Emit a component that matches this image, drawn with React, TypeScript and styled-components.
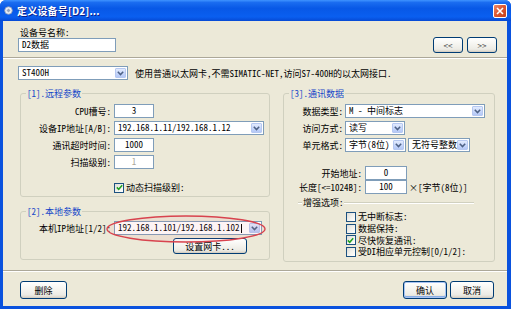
import React from 'react';
import styled, { createGlobalStyle } from 'styled-components';

const Global = createGlobalStyle`
  html, body { margin: 0; padding: 0; background: #fff; }
  body {
    font-family: "Noto Sans Mono CJK SC", "Noto Sans CJK SC", "Noto Sans", sans-serif;
    font-size: 9px;
    color: #000;
  }
  * { box-sizing: border-box; }
`;

const Window = styled.div`
  width: 511px;
  height: 309px;
  display: flex;
  flex-direction: column;
  background: #0a52de;
  border-radius: 6px 6px 0 0;
  overflow: hidden;
`;

const TitleBar = styled.div`
  height: 21px;
  flex: none;
  display: flex;
  align-items: center;
  padding: 0 4px 0 4px;
  background: linear-gradient(
    to bottom,
    #3f93ff 0%,
    #1a6cf0 12%,
    #0858e6 40%,
    #0a5ff0 80%,
    #0649d4 100%
  );
`;

const TitleIcon = styled.svg`
  width: 9px;
  height: 9px;
  flex: none;
`;

const TitleText = styled.div`
  flex: 1;
  margin-left: 4px;
  color: #fff;
  font-family: "Noto Sans CJK SC", sans-serif;
  font-weight: bold;
  font-size: 10px;
  letter-spacing: 0.2px;
  text-shadow: 1px 1px 0 #0a1e8a;
  white-space: nowrap;
`;

const CloseBtn = styled.div`
  width: 14px;
  height: 14px;
  flex: none;
  border: 1px solid #fff;
  border-radius: 2px;
  background: linear-gradient(135deg, #ee8a6a 0%, #dd5a35 45%, #c2401c 100%);
  display: flex;
  align-items: center;
  justify-content: center;
`;

const Client = styled.div`
  flex: 1;
  margin: 0 4px 3px 3px;
  background: #ece9d8;
  display: flex;
  flex-direction: column;
`;

const TopSection = styled.div`
  height: 36px;
  flex: none;
  display: flex;
  justify-content: space-between;
  align-items: flex-start;
  padding: 6px 10px 0 15px;
`;

const NameBlock = styled.div`
  display: flex;
  flex-direction: column;
`;

const NameLabel = styled.div`
  height: 11px;
  line-height: 11px;
  margin-left: 2px;
  white-space: nowrap;
`;

const TextBox = styled.div<{ $w: number; $center?: boolean; $disabled?: boolean }>`
  width: ${(p) => p.$w}px;
  height: 14px;
  flex: none;
  border: 1px solid #7f9db9;
  background: #fff;
  display: flex;
  align-items: center;
  justify-content: ${(p) => (p.$center ? 'center' : 'flex-start')};
  padding: 0 3px;
  color: ${(p) => (p.$disabled ? '#aca899' : '#000')};
  white-space: nowrap;
  line-height: 12px;
`;

const NavGroup = styled.div`
  display: flex;
  gap: 4px;
  padding-top: 10px;
`;

const Button = styled.div<{ $w: number; $h?: number; $default?: boolean }>`
  width: ${(p) => p.$w}px;
  height: ${(p) => p.$h ?? 18}px;
  flex: none;
  border: 1px solid #003c74;
  border-radius: 3px;
  background: linear-gradient(to bottom, #ffffff 0%, #f4f3ee 50%, #ecebe5 80%, #d8d2c6 100%);
  display: flex;
  align-items: center;
  justify-content: center;
  white-space: nowrap;
  box-shadow: ${(p) =>
    p.$default ? 'inset 0 0 0 1px #a8c3f2, inset 0 -1px 0 1px #89ade4' : 'inset 0 -1px 0 #d6d0c5'};
`;

const NavText = styled.span`
  color: #555;
  font-size: 9px;
`;

const Separator = styled.div<{ $mt?: number }>`
  height: 2px;
  flex: none;
  margin-top: ${(p) => p.$mt ?? 0}px;
  border-top: 1px solid #aca899;
  border-bottom: 1px solid #fff;
`;

const ModelRow = styled.div`
  display: flex;
  align-items: center;
  gap: 7px;
  margin-top: 7px;
  padding-left: 15px;
  height: 14px;
  white-space: nowrap;
`;

const ComboBox = styled.div<{ $w: number }>`
  width: ${(p) => p.$w}px;
  height: 14px;
  flex: none;
  border: 1px solid #7f9db9;
  background: #fff;
  display: flex;
  padding: 1px;
`;

const ComboText = styled.span`
  flex: 1;
  min-width: 0;
  display: flex;
  align-items: center;
  padding-left: 2px;
  white-space: nowrap;
  line-height: 12px;
`;

const Caret = styled.span`
  display: inline-block;
  width: 1px;
  height: 9px;
  background: #000;
  margin-left: 1px;
`;

const ComboArrow = styled.span`
  width: 11px;
  flex: none;
  border: 1px solid #b6c8f1;
  border-radius: 1px;
  background: linear-gradient(to bottom, #e2ebfe 0%, #c5d5fa 60%, #b4c8f6 100%);
  display: flex;
  align-items: center;
  justify-content: center;
`;

const Columns = styled.div`
  display: flex;
  gap: 13px;
  padding: 0 12px 0 17px;
  margin-top: 8px;
`;

const LeftCol = styled.div`
  width: 251px;
  display: flex;
  flex-direction: column;
`;

const Group = styled.fieldset<{ $h: number; $w?: number; $mt?: number }>`
  margin: ${(p) => p.$mt ?? 0}px 0 0 0;
  padding: 0;
  height: ${(p) => p.$h}px;
  width: ${(p) => (p.$w ? `${p.$w}px` : 'auto')};
  border: 1px solid #d0d0bf;
  border-radius: 3px;
  min-width: 0;
  position: relative;
`;

const Legend = styled.legend`
  margin-left: 5px;
  padding: 0 1px;
  color: #1446c8;
  line-height: 11px;
  height: 11px;
  white-space: nowrap;
`;

const FormGrid = styled.div<{ $label: number; $gap?: number; $pt?: number; $rowGap?: number }>`
  display: grid;
  grid-template-columns: ${(p) => p.$label}px auto;
  column-gap: ${(p) => p.$gap ?? 3}px;
  row-gap: ${(p) => p.$rowGap ?? 3}px;
  padding-top: ${(p) => p.$pt ?? 0}px;
  align-items: center;
  justify-items: start;
`;

const FieldLabel = styled.div`
  justify-self: end;
  white-space: nowrap;
  line-height: 11px;
`;

const Controls = styled.div<{ $mt?: number; $ml?: number }>`
  grid-column: 2;
  display: flex;
  align-items: center;
  gap: 2px;
  margin-top: ${(p) => p.$mt ?? 0}px;
  margin-left: ${(p) => p.$ml ?? 0}px;
  white-space: nowrap;
`;

const CheckRow = styled.div`
  display: flex;
  align-items: center;
  height: 11.7px;
  white-space: nowrap;
`;

const CheckBox = styled.span`
  width: 10px;
  height: 10px;
  flex: none;
  margin-right: 2px;
  border: 1px solid #1c5180;
  background: linear-gradient(135deg, #dcdcd7 0%, #f4f4f0 60%, #ffffff 100%);
  display: flex;
  align-items: center;
  justify-content: center;
`;

const OptionHeader = styled.div`
  display: flex;
  align-items: center;
  height: 11px;
  margin: 3px 20px 3px 14px;
`;

const EtchLine = styled.div<{ $w?: number }>`
  flex: ${(p) => (p.$w ? 'none' : '1')};
  width: ${(p) => (p.$w ? `${p.$w}px` : 'auto')};
  height: 2px;
  border-top: 1px solid #d0d0bf;
  border-bottom: 1px solid #fff;
`;

const OptionTitle = styled.span`
  padding: 0 1px;
  white-space: nowrap;
`;

const OptionList = styled.div`
  display: flex;
  flex-direction: column;
  padding-left: 62px;
`;

const Annotation = styled.svg`
  position: absolute;
  left: 85px;
  top: -2px;
  width: 160px;
  height: 28px;
  pointer-events: none;
  overflow: visible;
`;

const Footer = styled.div`
  display: flex;
  align-items: center;
  justify-content: space-between;
  padding: 0 13px 0 17px;
  margin-top: 9px;
`;

const FooterRight = styled.div`
  display: flex;
  gap: 3px;
`;

const Chevron = () => (
  <svg width="7" height="5" viewBox="0 0 7 5">
    <path d="M0.8 0.8 L3.5 3.6 L6.2 0.8" fill="none" stroke="#4d6185" strokeWidth="1.5" />
  </svg>
);

const Combo: React.FC<{ w: number; children?: React.ReactNode }> = ({ w, children }) => (
  <ComboBox $w={w}>
    <ComboText>{children}</ComboText>
    <ComboArrow>
      <Chevron />
    </ComboArrow>
  </ComboBox>
);

const Check: React.FC<{ checked?: boolean; label: string }> = ({ checked, label }) => (
  <CheckRow>
    <CheckBox>
      {checked && (
        <svg width="7" height="7" viewBox="0 0 7 7">
          <path d="M0.8 3.4 L2.7 5.3 L6.2 1.2" fill="none" stroke="#21a121" strokeWidth="1.5" />
        </svg>
      )}
    </CheckBox>
    <span>{label}</span>
  </CheckRow>
);

export default function App() {
  return (
    <>
      <Global />
      <Window>
        <TitleBar>
          <TitleIcon viewBox="0 0 9 9">
            <circle cx="4.5" cy="4.5" r="3.8" fill="#e8ecf4" stroke="#8a9ab8" strokeWidth="0.8" />
            <path d="M2.5 4.5 L4.5 2.5 L6.5 4.5 L4.5 6.5 Z" fill="#9aa6bb" />
          </TitleIcon>
          <TitleText>定义设备号[D2]...</TitleText>
          <CloseBtn>
            <svg width="8" height="8" viewBox="0 0 8 8">
              <path d="M1 1 L7 7 M7 1 L1 7" stroke="#fff" strokeWidth="1.6" />
            </svg>
          </CloseBtn>
        </TitleBar>
        <Client>
          <TopSection>
            <NameBlock>
              <NameLabel>设备号名称:</NameLabel>
              <TextBox $w={98}>D2数据</TextBox>
            </NameBlock>
            <NavGroup>
              <Button $w={30} $h={16}>
                <NavText>&lt;&lt;</NavText>
              </Button>
              <Button $w={30} $h={16}>
                <NavText>&gt;&gt;</NavText>
              </Button>
            </NavGroup>
          </TopSection>
          <Separator />
          <ModelRow>
            <Combo w={110}>ST400H</Combo>
            <span>使用普通以太网卡,不需SIMATIC-NET,访问S7-400H的以太网接口.</span>
          </ModelRow>
          <Columns>
            <LeftCol>
              <Group $h={109}>
                <Legend>[1].远程参数</Legend>
                <FormGrid $label={90} $pt={5}>
                  <FieldLabel>CPU槽号:</FieldLabel>
                  <TextBox $w={40} $center>3</TextBox>
                  <FieldLabel>设备IP地址[A/B]:</FieldLabel>
                  <Combo w={150}>192.168.1.11/192.168.1.12</Combo>
                  <FieldLabel>通讯超时时间:</FieldLabel>
                  <TextBox $w={40} $center>1000</TextBox>
                  <FieldLabel>扫描级别:</FieldLabel>
                  <TextBox $w={40} $center $disabled>1</TextBox>
                  <Controls $mt={10}>
                    <Check checked label="动态扫描级别:" />
                  </Controls>
                </FormGrid>
              </Group>
              <Group $h={54} $mt={9}>
                <Legend>[2].本地参数</Legend>
                <FormGrid $label={90} $pt={4}>
                  <FieldLabel>本机IP地址[1/2]:</FieldLabel>
                  <Combo w={148}>
                    192.168.1.101/192.168.1.102
                    <Caret />
                  </Combo>
                  <Controls $ml={59}>
                    <Button $w={74} $h={16}>
                      设置网卡...
                    </Button>
                  </Controls>
                </FormGrid>
                <Annotation viewBox="0 0 160 28">
                  <ellipse cx="80" cy="14" rx="79" ry="13" fill="rgba(230,120,130,0.08)" stroke="#d8434e" strokeWidth="1.4" />
                </Annotation>
              </Group>
            </LeftCol>
            <Group $h={174} $w={213}>
              <Legend>[3].通讯数据</Legend>
              <FormGrid $label={59} $gap={2} $pt={5}>
                <FieldLabel>数据类型:</FieldLabel>
                <Combo w={140}>M - 中间标志</Combo>
                <FieldLabel>访问方式:</FieldLabel>
                <Combo w={60}>读写</Combo>
                <FieldLabel>单元格式:</FieldLabel>
                <Controls>
                  <Combo w={61}>字节(8位)</Combo>
                  <Combo w={62}>无符号整数</Combo>
                </Controls>
              </FormGrid>
              <FormGrid $label={78} $rowGap={0} $pt={14}>
                <FieldLabel>开始地址:</FieldLabel>
                <TextBox $w={42} $center>0</TextBox>
                <FieldLabel>长度[&lt;=1024B]:</FieldLabel>
                <Controls>
                  <TextBox $w={42} $center>100</TextBox>
                  <span>×[字节(8位)]</span>
                </Controls>
              </FormGrid>
              <OptionHeader>
                <EtchLine $w={4} />
                <OptionTitle>增强选项:</OptionTitle>
                <EtchLine />
              </OptionHeader>
              <OptionList>
                <Check label="无中断标志:" />
                <Check label="数据保持:" />
                <Check checked label="尽快恢复通讯:" />
                <Check label="受DI相应单元控制[0/1/2]:" />
              </OptionList>
            </Group>
          </Columns>
          <Separator $mt={8} />
          <Footer>
            <Button $w={47}>删除</Button>
            <FooterRight>
              <Button $w={44} $default>
                确认
              </Button>
              <Button $w={44}>取消</Button>
            </FooterRight>
          </Footer>
        </Client>
      </Window>
    </>
  );
}
